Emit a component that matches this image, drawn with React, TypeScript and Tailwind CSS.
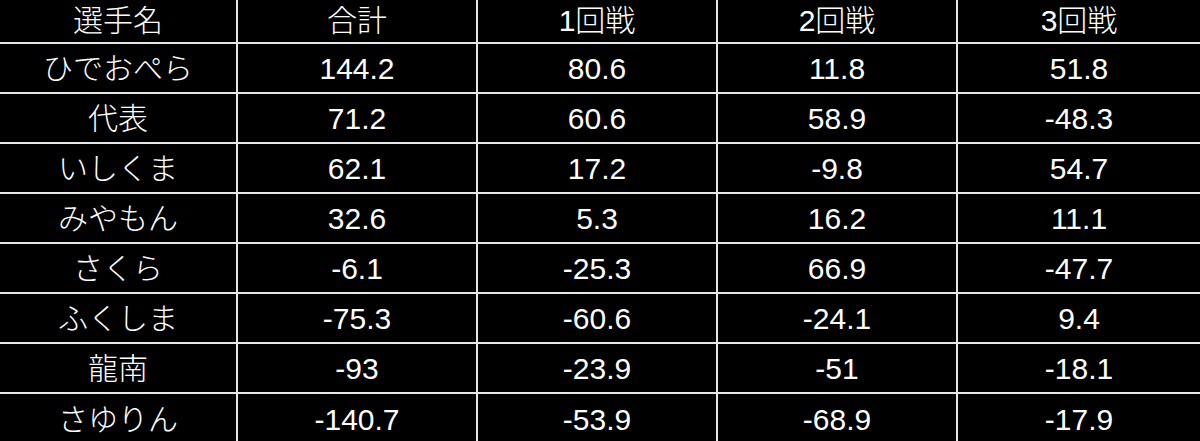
const header = ['選手名', '合計', '1回戦', '2回戦', '3回戦'];

const rows: string[][] = [
  ['ひでおぺら', '144.2', '80.6', '11.8', '51.8'],
  ['代表', '71.2', '60.6', '58.9', '-48.3'],
  ['いしくま', '62.1', '17.2', '-9.8', '54.7'],
  ['みやもん', '32.6', '5.3', '16.2', '11.1'],
  ['さくら', '-6.1', '-25.3', '66.9', '-47.7'],
  ['ふくしま', '-75.3', '-60.6', '-24.1', '9.4'],
  ['龍南', '-93', '-23.9', '-51', '-18.1'],
  ['さゆりん', '-140.7', '-53.9', '-68.9', '-17.9'],
];

const Row = ({ cells, header, last }: { cells: string[]; header?: boolean; last?: boolean }) => (
  <div
    className={`grid grid-cols-[238px_240px_240px_240px_242px] ${header ? 'h-[44px]' : 'h-[50px]'} ${
      last ? '' : 'border-b-2 border-[#e6e6e6]'
    }`}
  >
    {cells.map((c, i) => (
      <div
        key={i}
        className={`flex items-center justify-center ${i < 4 ? 'border-r-2 border-[#e6e6e6]' : ''} ${
          header ? 'pt-0' : 'pt-[1px]'
        }`}
      >
        {c}
      </div>
    ))}
  </div>
);

const App = () => {
  return (
    <div
      className="w-[1200px] h-[441px] overflow-hidden bg-black text-white text-[30px] font-light leading-none"
      style={{ fontFamily: '"Liberation Sans", "Noto Sans CJK JP", sans-serif' }}
    >
      <Row cells={header} header />
      {rows.map((r, i) => (
        <Row key={i} cells={r} last={i === rows.length - 1} />
      ))}
    </div>
  );
};

export default App;
